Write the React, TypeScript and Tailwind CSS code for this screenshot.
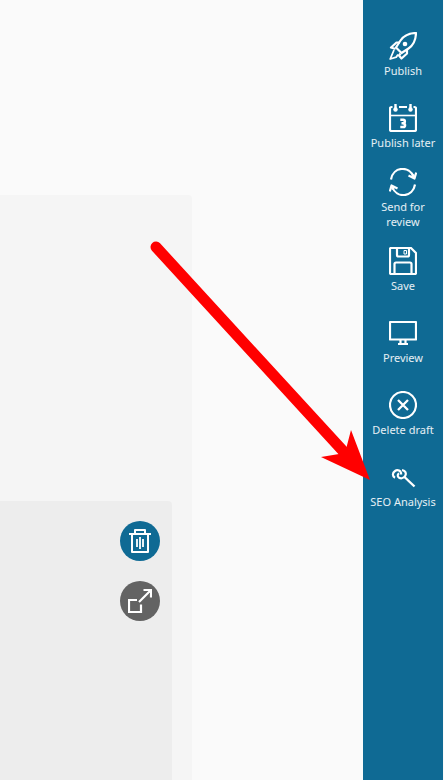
import type { ReactNode } from "react";

function Icon({ children, size = 28 }: { children: ReactNode; size?: number }) {
  return (
    <svg
      width={size}
      height={size}
      viewBox={`0 0 ${size} ${size}`}
      fill="none"
      stroke="currentColor"
      strokeWidth="2.2"
      strokeLinejoin="round"
      aria-hidden="true"
      className="shrink-0"
    >
      {children}
    </svg>
  );
}

const RocketIcon = () => (
  <Icon>
    <path d="M27 1C20 1.2 14.5 4 11.5 8.5L7 15.5L12.5 21L19.5 16.5C24 13.5 26.8 8 27 1Z" />
    <path d="M11 10.5H7.5L2 15.5L6.5 17M11.5 21.5L10 23.5L12.5 26.5L18 21.5V17.5" />
    <path d="M5 18L1.2 27L7.2 25.2L9 22.5" strokeWidth="1.8" />
    <circle cx="16" cy="12" r="2.3" fill="currentColor" stroke="none" />
  </Icon>
);

const CalendarIcon = () => (
  <Icon>
    <path d="M3.5 3H2.5Q1 3 1 4.5V25.5Q1 27 2.5 27H25.5Q27 27 27 25.5V4.5Q27 3 25.5 3H24.5M10 3H18" />
    <path d="M1 11.5H27" strokeWidth="1.6" />
    <path d="M6.5 0V5M21.5 0V5" strokeWidth="2.4" />
    <circle cx="6.5" cy="5.5" r="2.2" fill="currentColor" stroke="none" />
    <circle cx="21.5" cy="5.5" r="2.2" fill="currentColor" stroke="none" />
    <path d="M11.3 15.8H14.3Q15.8 15.8 15.8 17.4Q15.8 19.2 14 19.2H12.5M14 19.2Q16 19.3 16 21.2Q16 23 14.3 23H11.3" strokeWidth="2.6" />
  </Icon>
);

const RefreshIcon = () => (
  <Icon>
    <path d="M2 11.5C4 -1.5 20.5 -3 25 9.5M26 16.5C24 29.5 7.5 31 3 18.5" />
    <path d="M19.5 7.5L25.5 10.5L27.2 4.5M8.5 20.5L2.5 17.5L0.8 23.5" />
    <path d="M25 6.5L25.5 10.5L22 8.5ZM3 21.5L2.5 17.5L6 19.5Z" fill="currentColor" strokeWidth="1" />
  </Icon>
);

const SaveIcon = () => (
  <Icon>
    <path d="M2 1H22L27 6V26Q27 27 26 27H2Q1 27 1 26V2Q1 1 2 1Z" />
    <path d="M8 1V8Q8 9.5 9.5 9.5H18.5Q20 9.5 20 8V1M5.5 27V17Q5.5 15.5 7 15.5H21Q22.5 15.5 22.5 17V27" />
    <path d="M15 3.5H17.5V7H15Z" strokeWidth="1" />
  </Icon>
);

const MonitorIcon = () => (
  <Icon>
    <path d="M1 3H27V20.5H1ZM11.5 20.5V24M16.5 20.5V24M9 25H19" />
  </Icon>
);

const DeleteIcon = () => (
  <Icon>
    <circle cx="14" cy="14" r="13" />
    <path d="M9 9L19 19M19 9L9 19" strokeWidth="2.3" />
  </Icon>
);

const AnalysisIcon = () => (
  <Icon>
    <path d="M12.2 11.5C12.2 7.5 8.5 6.3 6 8C3.2 9.8 3.2 13.3 6 14.8" />
    <path d="M13 7C16.8 7.8 17.5 10.5 16.3 12.8C14.8 15.8 10.8 16 9.2 13.8C8.3 12.5 8.8 11 10.2 10.5" />
    <path d="M15.5 14L25.5 23.5" strokeWidth="2.4" />
  </Icon>
);

const TrashIcon = () => (
  <Icon size={24}>
    <path d="M1 5H23M7 5V1H17V5M4 5V23H20V5" strokeWidth="2" />
    <path d="M9 10V18M12 8V20M15 10V18" strokeWidth="1.8" />
  </Icon>
);

const ExpandIcon = () => (
  <Icon size={24}>
    <path d="M9 11H1V23H13V15.5M11 13L23 1M15.5 1H23V8.5" strokeLinejoin="miter" />
  </Icon>
);

const actions: { label: string; icon: ReactNode; tall?: boolean }[] = [
  { label: "Publish", icon: <RocketIcon /> },
  { label: "Publish later", icon: <CalendarIcon /> },
  { label: "Send for review", icon: <RefreshIcon />, tall: true },
  { label: "Save", icon: <SaveIcon /> },
  { label: "Preview", icon: <MonitorIcon /> },
  { label: "Delete draft", icon: <DeleteIcon /> },
  { label: "SEO Analysis", icon: <AnalysisIcon /> },
];

export default function App() {
  return (
    <div className="relative flex min-h-screen bg-[#fafafa] pr-px font-['Noto_Sans','Open_Sans',sans-serif]">
      <main className="flex min-w-0 flex-1 pt-[195px] pr-[171px]">
        <section className="flex flex-1 rounded-tr-[4px] bg-[#f5f5f5] pt-[306px] pr-5">
          <div className="flex flex-1 flex-col items-end gap-5 rounded-tr-[4px] bg-[#ededed] pt-5 pr-3">
            <button
              type="button"
              aria-label="Delete"
              className="flex size-10 items-center justify-center rounded-full bg-[#0f6a94] text-white"
            >
              <TrashIcon />
            </button>
            <button
              type="button"
              aria-label="Expand"
              className="flex size-10 items-center justify-center rounded-full bg-[#636363] text-white"
            >
              <ExpandIcon />
            </button>
          </div>
        </section>
      </main>

      <nav className="flex w-20 shrink-0 flex-col bg-[#0f6a94] pt-5 text-white">
        {actions.map(({ label, icon, tall }) => (
          <button
            key={label}
            type="button"
            className={`flex w-full flex-col items-center gap-[3px] px-1 text-[11px] leading-[15px] ${
              tall ? "pt-1 pb-1.5" : "pt-3 pb-3.5"
            }`}
          >
            {icon}
            <span className={`text-white/90 ${tall ? "w-14" : "whitespace-nowrap"}`}>{label}</span>
          </button>
        ))}
      </nav>

      <svg
        width="224"
        height="241"
        viewBox="0 0 224 241"
        aria-hidden="true"
        className="pointer-events-none absolute top-60 right-[72px]"
      >
        <path d="M8 7L196 212" stroke="#ff0000" strokeWidth="11" strokeLinecap="round" />
        <path d="M222 240L173 217L197 213L203 190Z" fill="#ff0000" />
      </svg>
    </div>
  );
}
